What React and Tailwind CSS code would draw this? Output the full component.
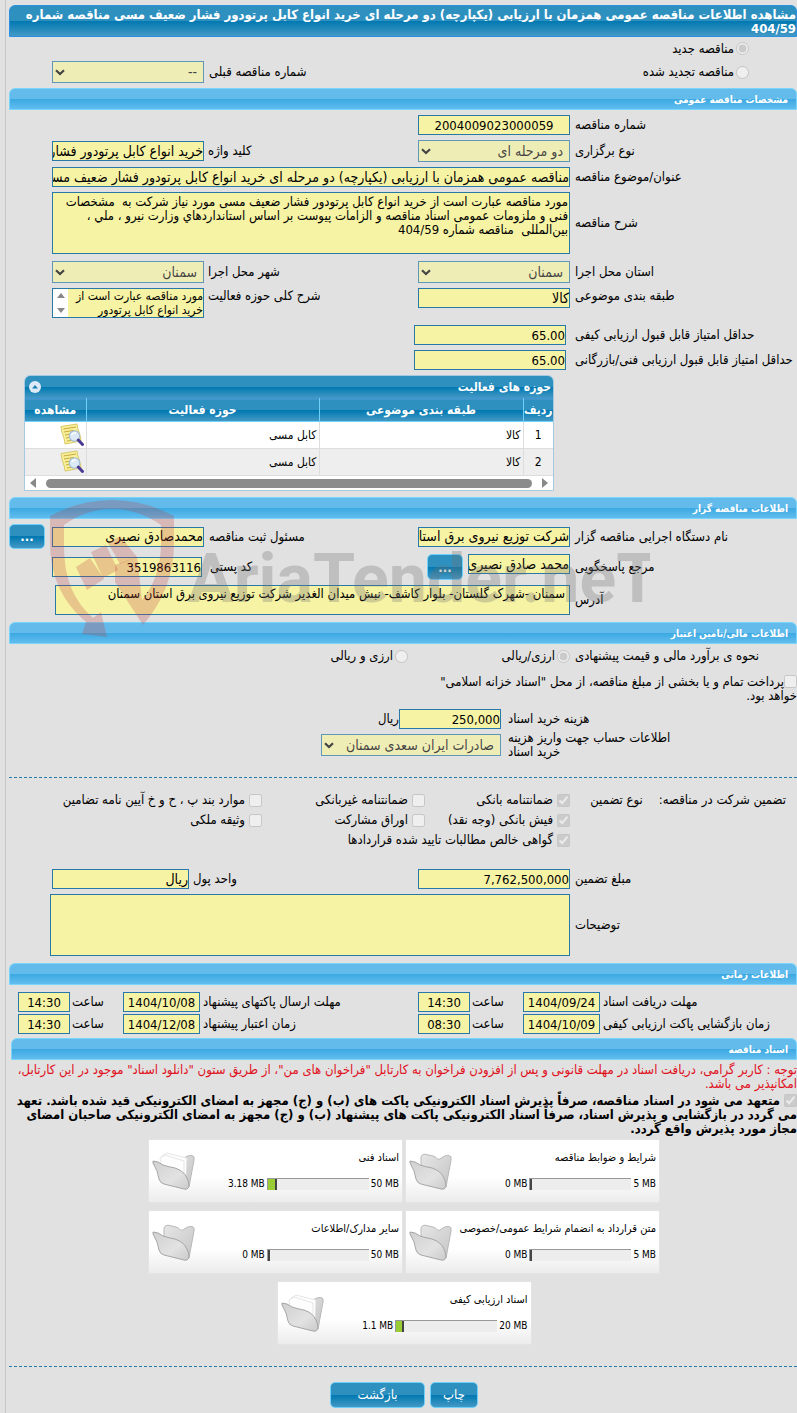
import React from "react";

const FONT = "font-['DejaVu_Sans_Condensed','DejaVu_Sans',sans-serif]";
const LIGHT_BAR = "bg-[linear-gradient(to_bottom,#63bbeb_0%,#63bbeb_50%,#3ba9e2_50%,#62bcee_100%)]";
const DARK_BAR = "bg-[linear-gradient(to_bottom,#2e90bf_0%,#2e90bf_50%,#0078b1_50%,#4499c5_100%)]";
const BOX = "min-w-0 border border-[#2878a8] bg-[#f6f3a4] text-black outline-none";

const COLS = "grid grid-cols-[227fr_152fr_214fr_152fr_43fr] items-center";

function SectionBar({ children, className = "" }) {
  return (
    <h2 className={`flex h-[22px] items-center rounded-t-md border border-[#79d5fb] px-2 text-[10px] font-bold text-white ${LIGHT_BAR} ${className}`}>
      {children}
    </h2>
  );
}

function Label({ htmlFor, children, className = "" }) {
  return (
    <label htmlFor={htmlFor} className={`block text-end leading-[14px] ${className}`}>
      {children}
    </label>
  );
}

function Field({ id, value, className = "w-full", align = "text-start", size = "text-[14px]" }) {
  return (
    <input
      id={id}
      type="text"
      readOnly
      defaultValue={value}
      className={`h-5 ${BOX} ${size} ${align} ${className}`}
    />
  );
}

function NumberField(props) {
  return <Field size="text-[13px]" {...props} />;
}

function Select({ id, value, className = "w-full" }) {
  return (
    <div className={`relative ${className}`}>
      <select
        id={id}
        disabled
        className="block h-[22px] w-full appearance-none border border-[#2878a8] bg-[#f6f3a4] ps-1.5 pe-5 text-[14px] leading-5 text-black opacity-70"
      >
        <option>{value}</option>
      </select>
      <svg viewBox="0 0 10 7" className="pointer-events-none absolute left-[3px] top-[8px] h-[7px] w-[10px]" aria-hidden="true">
        <path d="M1 1.2 L5 5 L9 1.2" fill="none" stroke="#444" strokeWidth="2.2" />
      </svg>
    </div>
  );
}

function Choice({ type = "checkbox", name, checked, children, className = "" }) {
  return (
    <label className={`flex items-center whitespace-nowrap ${type === "radio" ? "gap-0.5" : "gap-1"} ${className}`}>
      <input type={type} name={name} disabled defaultChecked={checked} className="size-[13px] shrink-0" />
      <span>{children}</span>
    </label>
  );
}

function Button({ children, className = "" }) {
  return (
    <button type="button" className={`rounded-[5px] border border-[#6fd0fa] text-white ${DARK_BAR} ${className}`}>
      {children}
    </button>
  );
}

function NoteIcon() {
  return (
    <svg viewBox="0 0 24 24" className="block size-6" aria-hidden="true">
      <path d="M1 3.5 L17 1 C17 6 21 12 21 18 L5 21 C5 15 1 10 1 3.5 Z" fill="#f7ef9a" stroke="#d9c96a" strokeWidth="1" />
      <path d="M3.5 6 L16 4 M4 9 L14 7.4 M5 12 L10 11.2 M6 15 L10 14.3 M7 18 L12 17.2" stroke="#c9a93c" strokeWidth="1" />
      <circle cx="14.5" cy="13" r="5.2" fill="#dbeaf6" stroke="#a9bfd2" strokeWidth="1.3" />
      <path d="M11.5 12 Q13 9.5 16 10" stroke="#fff" strokeWidth="1.4" fill="none" />
      <path d="M18.3 17 L22.5 21.5" stroke="#4a3a96" strokeWidth="3" strokeLinecap="round" />
    </svg>
  );
}

function Folder({ full }) {
  return (
    <svg viewBox="0 0 44 38" className="h-[38px] w-11 shrink-0" aria-hidden="true">
      <defs>
        <linearGradient id="folderBack" x1="0" y1="0" x2="1" y2="1">
          <stop offset="0" stopColor="#e6e6e6" />
          <stop offset="1" stopColor="#c4c4c4" />
        </linearGradient>
        <linearGradient id="folderFront" x1="0" y1="0" x2="1" y2="1">
          <stop offset="0" stopColor="#d0d0d0" />
          <stop offset="0.6" stopColor="#e2e2e2" />
          <stop offset="1" stopColor="#cacaca" />
        </linearGradient>
      </defs>
      <path d="M12 5 Q13 2 16 2.2 L24 4 Q27 5 28.5 7 Q31 8 33 5.5 Q36 3 40 3.5 Q43 4 42 8 L37 35 Q36 37.500 33 36 L12 20 Z" fill="url(#folderBack)" stroke="#b9b9b9" strokeWidth="1" />
      {full && (
        <g fill="#fdfdfd" stroke="#d6d6d6" strokeWidth="0.6">
          <path d="M10 4 L15 1 L35 6 L34 30 L12 22 Z" />
          <path d="M8 6 L13 3 L32 9 L32 32 L10 24 Z" />
        </g>
      )}
      <path d="M1 9 Q6 9 11 13 Q17 15 23 16 Q32 19 35 26 Q37 30 37 34 Q36 38 32 37 L12 32 Q8 31 7 27 Q6 19 1 11 Z" fill="url(#folderFront)" stroke="#a6a6a6" strokeWidth="1" />
    </svg>
  );
}

function FileCard({ title, used, total, fill }) {
  return (
    <article className="flex h-16 w-[255px] items-center border border-[#e4e4e4] bg-linear-to-b from-white from-60% to-[#ececec]">
      <div className="flex min-w-0 flex-1 flex-col gap-3 ps-[3px] text-[10px] leading-[14px]">
        <h3 className="whitespace-nowrap text-[11px]">{title}</h3>
        <div className="flex items-center gap-0.5">
          <span dir="ltr">{total}</span>
          <div dir="ltr" className="h-3 w-[102px] border-l border-t border-[#999] bg-[#ededed]">
            <div className="h-full border-r-2 border-[#444] bg-[#99cc33]" style={{ width: fill }} />
          </div>
          <span dir="ltr">{used}</span>
        </div>
      </div>
      <div className="me-[3px] w-11 shrink-0">
        <Folder full={fill > 2} />
      </div>
    </article>
  );
}

function Watermark() {
  return (
    <svg viewBox="0 0 610 150" className="pointer-events-none absolute left-[31px] top-0 h-[150px] w-[610px]" aria-hidden="true">
      <g fill="#be3c3c" fillOpacity="0.25">
        <path d="M10 19 Q40 3 72 3 Q104 3 134 19 L134 46 Q134 92 103 128 L75 85 L75 68 L97 60 L102 103 Q121 80 121 46 L121 28 Q98 12 72 12 Q46 12 24 28 L24 50 Q24 96 53 121 L61 115 L67 140 L42 137 L46 125 Q10 95 10 46 Z" />
        <path d="M36 70 L50 61 L64 82 L47 93 Z" />
        <path d="M51 55 L66 48 L78 73 L63 81 Z" />
        <path d="M68 46 L80 39 L97 60 L80 67 Z" />
      </g>
      <text x="148" y="105" fontFamily="Roboto, sans-serif" fontWeight="700" fontSize="68" fill="#707070" fillOpacity="0.3" direction="ltr">
        AriaTender.neT
      </text>
    </svg>
  );
}

function ActivityTable() {
  const rows = [1, 2];
  const cell = "border-b border-l border-[#ddd] px-0.5";
  const head = "border-l border-[#6fd0fa] px-0 font-bold last:border-l-0";
  return (
    <section className="ms-[243px] me-[15px] overflow-hidden rounded-t-md border border-[#a6c9e2] bg-white">
      <div className={`flex h-[22px] items-center justify-between ps-0.5 pe-1 text-white ${DARK_BAR}`}>
        <h3 className="text-[12px] font-bold">حوزه های فعالیت</h3>
        <button type="button" aria-label="بستن" className="flex size-3 items-center justify-center rounded-full bg-[#dcebf7]">
          <svg viewBox="0 0 8 8" className="size-2"><path d="M4 2 L7 5.500 H1 Z" fill="#1b7fb5" /></svg>
        </button>
      </div>
      <table className="w-full table-fixed border-collapse text-[12px]">
        <colgroup>
          <col className="w-[30px]" />
          <col className="w-[204px]" />
          <col />
          <col className="w-[61px]" />
        </colgroup>
        <thead>
          <tr className={`h-[23px] border-b border-t border-b-[#6fd0fa] border-t-[#3f95d8] text-white ${DARK_BAR}`}>
            <th className={head}>ردیف</th>
            <th className={head}>طبقه بندی موضوعی</th>
            <th className={head}>حوزه فعالیت</th>
            <th className={head}>مشاهده</th>
          </tr>
        </thead>
        <tbody>
          {rows.map((n) => (
            <tr key={n} className="h-[27px] even:bg-[#eee]">
              <td className={`${cell} text-center`}>{n}</td>
              <td className={cell}>کالا</td>
              <td className={cell}>کابل مسی</td>
              <td className={`${cell} border-l-0`}><NoteIcon /></td>
            </tr>
          ))}
        </tbody>
      </table>
      <div className="flex h-[14px] items-center gap-2.5 px-[5px]" aria-hidden="true">
        <svg viewBox="0 0 6 10" className="h-2.5 w-1.5"><path d="M0 0 L6 5 L0 10 Z" fill="#888" /></svg>
        <div className="h-[9px] flex-1 rounded-full bg-[#8b8b8b]" />
        <svg viewBox="0 0 6 10" className="h-2.5 w-1.5"><path d="M6 0 L0 5 L6 10 Z" fill="#888" /></svg>
      </div>
    </section>
  );
}

const TIMES = [
  ["مهلت دریافت اسناد", "1404/09/24", "14:30", "مهلت ارسال پاکتهای پیشنهاد", "1404/10/08", "14:30"],
  ["زمان بازگشایی پاکت ارزیابی کیفی", "1404/10/09", "08:30", "زمان اعتبار پیشنهاد", "1404/12/08", "14:30"],
];

export default function App() {
  return (
    <div dir="rtl" className={`min-h-screen overflow-x-hidden bg-[#e1e1e1] pl-[5px] text-[13px] text-black ${FONT}`}>
      <main className="border-l border-[#c6c6c6] pb-[5px] pl-[3px] pt-[5px]">
        <h1 className={`h-8 rounded-t-md border border-[#2d8fe0] pt-0.5 text-[13px] font-bold leading-[14px] text-white ${DARK_BAR}`}>
          مشاهده اطلاعات مناقصه عمومی همزمان با ارزیابی (یکپارچه) دو مرحله ای خرید انواع کابل پرتودور فشار ضعیف مسی مناقصه شماره 404/59
        </h1>

        <section className="mb-1">
          <div className="flex h-[23px] items-center ps-12">
            <Choice type="radio" name="kind" checked>مناقصه جدید</Choice>
          </div>
          <div className={`h-6 ${COLS}`}>
            <Choice type="radio" name="kind" className="ps-12">مناقصه تجدید شده</Choice>
            <span />
            <Label htmlFor="prev" className="pe-[5px]">شماره مناقصه قبلی</Label>
            <Select id="prev" value="--" />
          </div>
        </section>

        <SectionBar>مشخصات مناقصه عمومی</SectionBar>
        <section className="flex flex-col gap-[5px] pb-1.5 pt-[5px]">
          <div className={COLS}>
            <Label htmlFor="num" className="pe-[5px]">شماره مناقصه</Label>
            <NumberField id="num" value="2004009023000059" align="text-center" />
          </div>
          <div className={COLS}>
            <Label htmlFor="type" className="pe-[5px]">نوع برگزاری</Label>
            <Select id="type" value="دو مرحله ای" />
            <Label htmlFor="kw" className="pe-1">کلید واژه</Label>
            <Field id="kw" value="خرید انواع کابل پرتودور فشار ضعیف مسی" />
          </div>
          <div className={COLS}>
            <Label htmlFor="subject" className="pe-[5px]">عنوان/موضوع مناقصه</Label>
            <Field id="subject" className="col-span-3 w-full" value="مناقصه عمومی همزمان با ارزیابی (یکپارچه) دو مرحله ای خرید انواع کابل پرتودور فشار ضعیف مسی مناقصه شماره 404/59" />
          </div>
          <div className={COLS}>
            <Label htmlFor="desc" className="pe-[5px]">شرح مناقصه</Label>
            <textarea
              id="desc"
              readOnly
              className={`col-span-3 block h-[62px] resize-none whitespace-pre-wrap px-px py-0.5 leading-[14px] ${BOX}`}
              defaultValue={"مورد مناقصه عبارت است از خرید انواع کابل پرتودور فشار ضعیف مسی مورد نیاز شرکت به  مشخصات فنی و ملزومات عمومی اسناد مناقصه و الزامات پیوست بر اساس استانداردهاي وزارت نیرو ، ملي ، بین‌المللی  مناقصه شماره 404/59"}
            />
          </div>
          <div className={`pt-0.5 ${COLS}`}>
            <Label htmlFor="prov" className="pe-[5px]">استان محل اجرا</Label>
            <Select id="prov" value="سمنان" />
            <Label htmlFor="city" className="pe-1">شهر محل اجرا</Label>
            <Select id="city" value="سمنان" />
          </div>
          <div className="grid grid-cols-[227fr_152fr_214fr_152fr_43fr] items-start">
            <Label htmlFor="cat" className="pe-[5px] pt-px">طبقه بندی موضوعی</Label>
            <Field id="cat" value="کالا" />
            <Label htmlFor="area" className="pe-1 pt-px">شرح کلی حوزه فعالیت</Label>
            <div className="flex h-[30px] border border-[#2878a8] bg-[#f6f3a4]">
              <textarea
                id="area"
                readOnly
                className="min-w-0 flex-1 resize-none overflow-hidden text-[12px] leading-[14px] outline-none"
                defaultValue={"مورد مناقصه عبارت است از خرید انواع کابل پرتودور"}
              />
              <div className="flex w-[15px] flex-col items-center justify-between bg-white py-1" aria-hidden="true">
                <svg viewBox="0 0 8 5" className="h-[5px] w-2"><path d="M4 0 L8 5 H0 Z" fill="#888" /></svg>
                <svg viewBox="0 0 8 5" className="h-[5px] w-2"><path d="M4 5 L8 0 H0 Z" fill="#888" /></svg>
              </div>
            </div>
          </div>
          <div className="grid grid-cols-[231fr_152fr_405fr] items-center pt-0.5">
            <Label htmlFor="q1" className="pe-[9px]">حداقل امتیاز قابل قبول ارزیابی کیفی</Label>
            <NumberField id="q1" value="65.00" />
          </div>
          <div className="grid grid-cols-[231fr_152fr_405fr] items-center">
            <Label htmlFor="q2" className="whitespace-nowrap pe-[9px]">حداقل امتیاز قابل قبول ارزیابی فنی/بازرگانی</Label>
            <NumberField id="q2" value="65.00" />
          </div>
          <ActivityTable />
        </section>

        <div className="relative">
          <SectionBar>اطلاعات مناقصه گزار</SectionBar>
          <section className="flex flex-col gap-[5px] pb-[7px] pt-[5px]">
            <div className={`h-[25px] ${COLS}`}>
              <Label htmlFor="org" className="pe-[5px]">نام دستگاه اجرایی مناقصه گزار</Label>
              <Field id="org" value="شرکت توزیع نیروی برق استان سمنان" />
              <Label htmlFor="resp" className="pe-[5px]">مسئول ثبت مناقصه</Label>
              <Field id="resp" value="محمدصادق نصیری" />
              <div className="flex justify-end"><Button className="h-[25px] w-9 font-bold leading-none">...</Button></div>
            </div>
            <div className="grid h-[26px] grid-cols-[227fr_102fr_41fr_225fr_150fr_43fr] items-center">
              <Label htmlFor="ref" className="pe-[5px]">مرجع پاسخگویی</Label>
              <Field id="ref" value="محمد صادق نصیری" className="w-full self-start" />
              <div className="flex justify-end"><Button className="h-[26px] w-9 font-bold leading-none">...</Button></div>
              <Label htmlFor="zip" className="pe-2">کد پستی</Label>
              <NumberField id="zip" value="3519863116" />
            </div>
            <div className="grid grid-cols-[227fr_515fr_46fr] items-center">
              <Label htmlFor="addr" className="pe-[5px]">آدرس</Label>
              <textarea
                id="addr"
                readOnly
                className={`block h-[30px] resize-none overflow-hidden px-1 py-px leading-[14px] ${BOX}`}
                defaultValue="سمنان -شهرک گلستان- بلوار کاشف- نبش میدان الغدیر شرکت توزیع نیروی برق استان سمنان"
              />
            </div>
          </section>
          <Watermark />
        </div>

        <SectionBar>اطلاعات مالی/تامین اعتبار</SectionBar>
        <section className="flex flex-col">
          <div className="grid h-6 grid-cols-[227fr_162fr_399fr] items-center">
            <span className="whitespace-nowrap pe-[5px] text-end">نحوه ی برآورد مالی و قیمت پیشنهادی</span>
            <Choice type="radio" name="currency" checked>ارزی/ریالی</Choice>
            <Choice type="radio" name="currency">ارزی و ریالی</Choice>
          </div>
          <label className="mt-[7px] block max-w-[373px] leading-[14px]">
            <input type="checkbox" disabled className="size-[13px] align-top" />
            پرداخت تمام و یا بخشی از مبلغ مناقصه، از محل "اسناد خزانه اسلامی" خواهد بود.
          </label>
          <div className="mt-1.5 grid grid-cols-[296fr_102fr_390fr] items-center">
            <Label htmlFor="fee" className="pe-[7px]">هزینه خرید اسناد</Label>
            <NumberField id="fee" value="250,000" />
            <span>ریال</span>
          </div>
          <div className="mt-[5px] grid grid-cols-[296fr_180fr_312fr] items-center">
            <Label htmlFor="acct" className="-my-1 w-full ps-[116px] pe-[7px]">اطلاعات حساب جهت واریز هزینه خرید اسناد</Label>
            <Select id="acct" value="صادرات ایران سعدی سمنان" />
          </div>
        </section>

        <section className="mt-[21px] border-t border-dashed border-[#2878a8] pt-3">
          <div className="grid auto-rows-[20px] grid-cols-[227fr_145fr_163fr_253fr] items-center">
            <div className="flex gap-4 whitespace-nowrap ps-[11px]">
              <span>تضمین شرکت در مناقصه:</span>
              <span>نوع تضمین</span>
            </div>
            <Choice checked>ضمانتنامه بانکی</Choice>
            <Choice>ضمانتنامه غیربانکی</Choice>
            <Choice>موارد بند پ ، ح و خ آیین نامه تضامین</Choice>
            <span />
            <Choice checked>فیش بانکی (وجه نقد)</Choice>
            <Choice>اوراق مشارکت</Choice>
            <Choice>وثیقه ملکی</Choice>
            <span />
            <Choice checked className="col-span-3">گواهی خالص مطالبات تایید شده قراردادها</Choice>
          </div>
          <div className="mt-[19px] grid grid-cols-[227fr_152fr_229fr_137fr_43fr] items-center">
            <Label htmlFor="amount" className="pe-[5px]">مبلغ تضمین</Label>
            <NumberField id="amount" value="7,762,500,000" />
            <Label htmlFor="unit" className="pe-1">واحد پول</Label>
            <Field id="unit" value="ریال" />
          </div>
          <div className="mb-[7px] mt-[5px] grid grid-cols-[227fr_520fr_41fr] items-center">
            <Label htmlFor="notes" className="pe-[5px]">توضیحات</Label>
            <textarea id="notes" readOnly className={`block h-[62px] resize-none ${BOX}`} />
          </div>
        </section>

        <SectionBar>اطلاعات زمانی</SectionBar>
        <section className="flex flex-col gap-0.5 pb-1 pt-[7px]">
          {TIMES.map(([a, d1, t1, b, d2, t2], i) => (
            <div key={i} className="grid grid-cols-[197fr_77fr_53fr_52fr_218fr_77fr_53fr_52fr_9fr] items-center whitespace-nowrap">
              <Label htmlFor={`d1-${i}`} className="pe-[3px]">{a}</Label>
              <NumberField id={`d1-${i}`} value={d1} align="text-center" />
              <Label htmlFor={`t1-${i}`} className="pe-0.5">ساعت</Label>
              <NumberField id={`t1-${i}`} value={t1} align="text-center" />
              <Label htmlFor={`d2-${i}`} className="pe-[3px]">{b}</Label>
              <NumberField id={`d2-${i}`} value={d2} align="text-center" />
              <Label htmlFor={`t2-${i}`} className="pe-0.5">ساعت</Label>
              <NumberField id={`t2-${i}`} value={t2} align="text-center" />
            </div>
          ))}
        </section>

        <SectionBar className="ml-0.5">اسناد مناقصه</SectionBar>
        <p className="mt-[3px] leading-[14px] text-[#e0101c]">
          توجه : کاربر گرامی، دریافت اسناد در مهلت قانونی و پس از افزودن فراخوان به کارتابل "فراخوان های من"، از طریق ستون "دانلود اسناد" موجود در این کارتابل، امکانپذیر می باشد.
        </p>
        <label className="mt-[3px] block font-bold leading-[14px]">
          <input type="checkbox" disabled defaultChecked className="size-[13px] align-top" />{" "}
          متعهد می شود در اسناد مناقصه، صرفاً پذیرش اسناد الکترونیکی پاکت های (ب) و (ج) مجهز به امضای الکترونیکی قید شده باشد. تعهد می گردد در بازگشایی و پذیرش اسناد، صرفاً اسناد الکترونیکی پاکت های پیشنهاد (ب) و (ج) مجهز به امضای الکترونیکی صاحبان امضای مجاز مورد پذیرش واقع گردد.
        </label>

        <section className="mx-auto mt-[3px] flex max-w-[600px] flex-wrap justify-center gap-x-0.5 gap-y-[7px] pl-0.5">
          <FileCard title="شرایط و ضوابط مناقصه" total="5 MB" used="0 MB" fill={2} />
          <FileCard title="اسناد فنی" total="50 MB" used="3.18 MB" fill={9} />
          <FileCard title="متن قرارداد به انضمام شرایط عمومی/خصوصی" total="5 MB" used="0 MB" fill={2} />
          <FileCard title="سایر مدارک/اطلاعات" total="50 MB" used="0 MB" fill={2} />
          <FileCard title="اسناد ارزیابی کیفی" total="20 MB" used="1.1 MB" fill={8} />
        </section>

        <footer className="mt-[21px] flex justify-center gap-[5px] border-t border-dashed border-[#2878a8] pt-[15px] pl-0.5">
          <Button className="h-[26px] w-12">چاپ</Button>
          <Button className="h-[26px] w-[95px]">بازگشت</Button>
        </footer>
      </main>
    </div>
  );
}
